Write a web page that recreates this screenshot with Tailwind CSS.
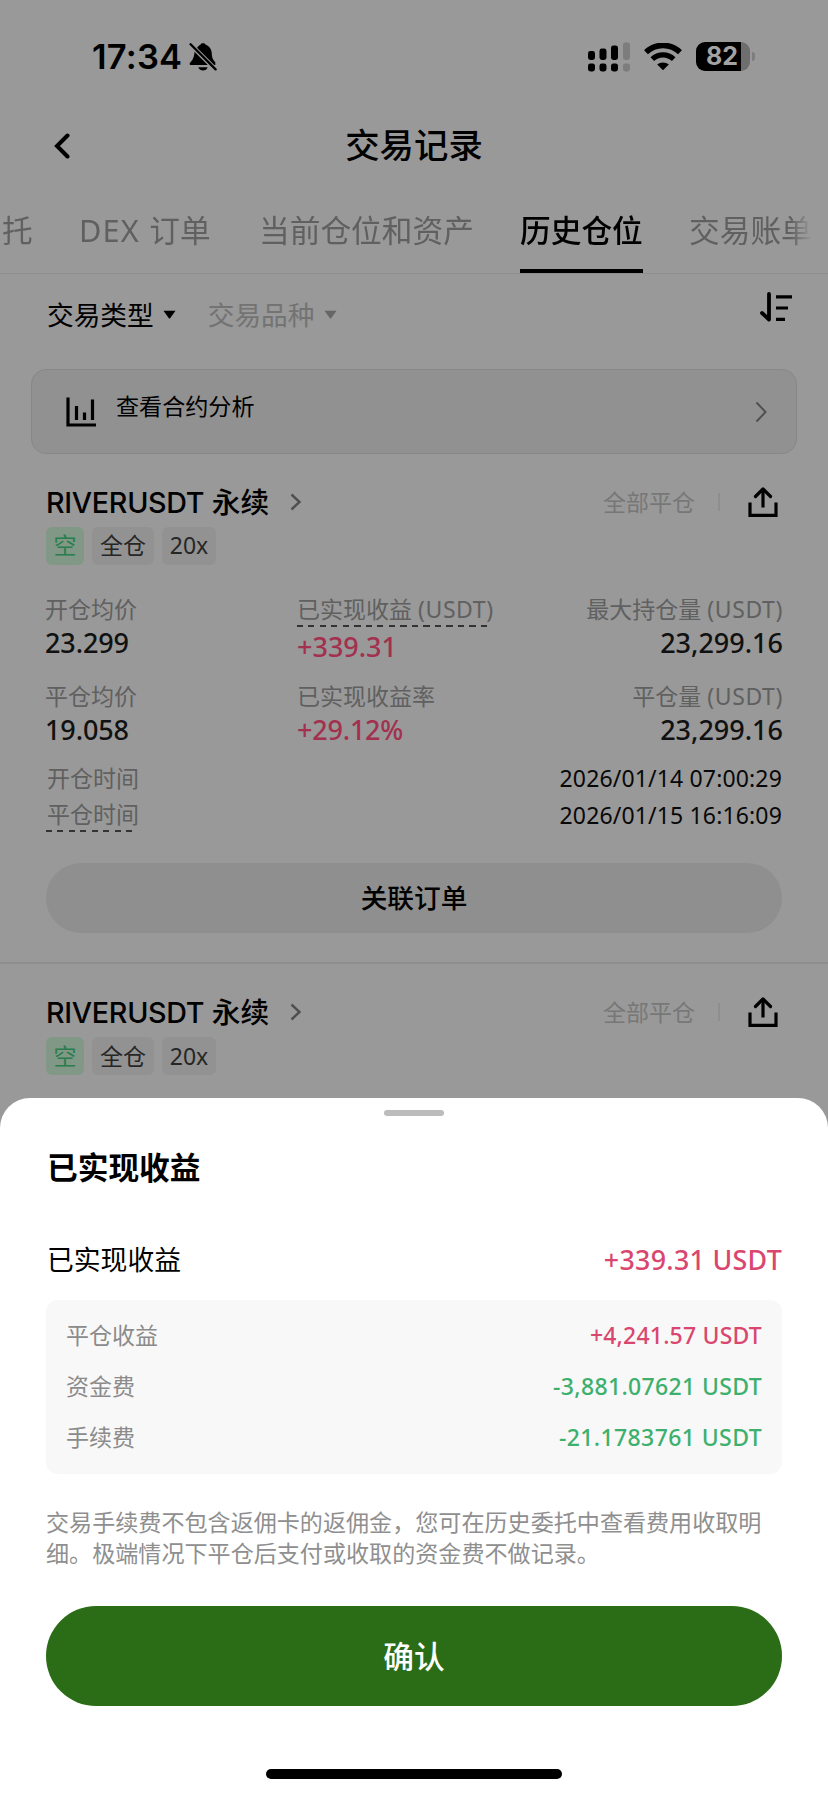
<!DOCTYPE html>
<html lang="zh-CN">
<head>
<meta charset="utf-8">
<title>交易记录</title>
<script src="https://cdn.jsdelivr.net/npm/@tailwindcss/browser@4"></script>
</head>
<body class="bg-[#999999]">
<div class="w-[828px] h-[1795px] overflow-hidden bg-[#999999] text-black flex flex-col font-['Noto_Sans','Noto_Sans_CJK_SC',sans-serif] whitespace-nowrap">

  <!-- Status bar -->
  <div class="h-[113px] shrink-0 flex items-center pl-[92px] pr-[73px]">
    <span class="w-[97px] mt-px font-['Inter',sans-serif] font-semibold text-[34.500px] leading-none tracking-[0.200px]">17:34</span>
    <svg class="w-[28px] h-[30px]" viewBox="0 0 28 30" fill="#000">
      <path d="M8.500 5.200 C9.600 4 10.700 3.200 11.600 2.600 C12 0.800 16 0.800 16.400 2.600 C20.500 4 22.600 7.600 22.800 11.600 C22.900 16 24 17.800 26.300 20.300 V23 H1.600 C0.400 23 0.300 21.400 1.300 20.500 C4.600 17.300 5.300 13.600 5.600 9.600Z"/>
      <path d="M9.400 25.300 H18.600 C17.600 29.600 10.400 29.600 9.400 25.300Z"/>
      <path d="M1 2 L27.500 28.500" stroke="#999" stroke-width="4.600"/>
      <path d="M1.600 2.200 L26.600 27.400" stroke="#000" stroke-width="2.300" stroke-linecap="round"/>
    </svg>
    <svg class="ml-auto w-[42px] h-[30px]" viewBox="0 0 42 30">
      <rect x="0" y="9" width="7" height="9" rx="2.400"/><rect x="11.500" y="6.500" width="7" height="11.500" rx="2.400"/><rect x="23" y="3.500" width="7" height="14.500" rx="2.400"/><rect x="35" y="0.500" width="7" height="17.500" rx="2.400" fill="#7d7d7d"/>
      <rect x="0" y="21.500" width="7" height="8" rx="2.400"/><rect x="11.500" y="21.500" width="7" height="8" rx="2.400"/><rect x="23" y="21.500" width="7" height="8" rx="2.400"/><rect x="35" y="21.500" width="7" height="8" rx="2.400" fill="#7d7d7d"/>
    </svg>
    <svg class="ml-[14px] w-[38px] h-[28px]" viewBox="0 0 38 28" fill="none" stroke="#000">
      <path d="M2 9.200 A24.500 24.500 0 0 1 36 9.200" stroke-width="5.600"/>
      <path d="M8.300 16.200 A15.500 15.500 0 0 1 29.700 16.200" stroke-width="5.200"/>
      <path d="M19 27.300 L13.200 21.600 C16 18.800 22 18.800 24.800 21.600Z" fill="#000" stroke="none"/>
    </svg>
    <div class="ml-[14px] w-[54px] h-[29px] rounded-[9px] overflow-hidden bg-[linear-gradient(90deg,#000_45px,#6e6e6e_45px)] flex items-center">
      <span class="pl-[10px] font-['Inter',sans-serif] font-bold text-[25px] leading-none text-[#a3a3a3]">82</span>
    </div>
    <div class="ml-[2px] w-[3px] h-[9px] rounded-r-full bg-[#7d7d7d]"></div>
  </div>

  <!-- Title bar -->
  <div class="h-[65px] shrink-0 grid grid-cols-[1fr_auto_1fr] items-center">
    <svg class="ml-[52px] w-[18px] h-[28px]" viewBox="0 0 18 28" fill="none" stroke="#000" stroke-width="4" stroke-linecap="round"><path d="M15.500 3.500 L5 14 L15.500 24.500"/></svg>
    <h1 class="text-[34.400px] leading-none font-medium">交易记录</h1>
  </div>

  <!-- Tabs -->
  <div class="h-[96px] shrink-0 flex text-[30.700px] text-[#606060] border-b border-[#8f8f8f] pt-[11px]">
    <div class="w-[812px] flex overflow-hidden [mask-image:linear-gradient(90deg,#000_790px,transparent_812px)]">
      <span class="w-[79px] shrink-0 pl-[2px] leading-[83px]">托</span>
      <span class="w-[180px] shrink-0 leading-[83px]"><span class="tracking-[1.200px]">DEX </span>订单</span>
      <span class="w-[261px] shrink-0 leading-[83px]">当前仓位和资产</span>
      <span class="w-[123px] h-[84px] shrink-0 leading-[83px] text-black font-medium border-b-4 border-black">历史仓位</span>
      <span class="pl-[46px] shrink-0 leading-[83px]">交易账单</span>
    </div>
  </div>

  <!-- Filters -->
  <div class="h-[95px] shrink-0 flex items-start pl-[47px] pr-[35px]">
    <div class="h-[82px] flex items-center text-[26.700px]">
      <span>交易类型</span>
      <svg class="ml-[9px] w-[13px] h-[10px]" viewBox="0 0 13 10"><path d="M0.500 0.800 H12.500 L7.300 8 Q6.500 9 5.700 8Z"/></svg>
      <span class="ml-[32px] text-[#737373]">交易品种</span>
      <svg class="ml-[9px] w-[13px] h-[10px]" viewBox="0 0 13 10"><path d="M0.500 0.800 H12.500 L7.300 8 Q6.500 9 5.700 8Z" fill="#666"/></svg>
    </div>
    <svg class="ml-auto mt-[18px] w-[33px] h-[31px]" viewBox="0 0 33 31" fill="none" stroke="#000" stroke-width="3.200"><path d="M9 2 V27.500 L2 21" stroke-width="3.800" stroke-linecap="round" stroke-linejoin="round"/><path d="M16 4.800 H32 M16 16 H28 M16 27.300 H25"/></svg>
  </div>

  <!-- Analysis entry -->
  <div class="mx-[31px] h-[85px] shrink-0 rounded-[15px] border border-[#878787] bg-[#919191] flex items-center pl-[34px] pr-[29px]">
    <svg class="w-[30px] h-[30px]" viewBox="0 0 30 30" fill="none" stroke="#000" stroke-width="3.200"><path d="M2 0.500 V28 H30"/><path d="M10.500 9 V23 M18.500 15.500 V23 M26.500 2.500 V23"/></svg>
    <span class="ml-[20px] mb-[9px] text-[23.100px] leading-none">查看合约分析</span>
    <svg class="ml-auto w-[12px] h-[22px]" viewBox="0 0 12 22" fill="none" stroke="#505050" stroke-width="2"><path d="M1.500 1.500 L10.500 11 L1.500 20.500"/></svg>
  </div>

  <!-- Position 1 -->
  <section class="h-[510px] shrink-0 border-b-2 border-[#8d8d8d] pt-[24px]">
    <div class="h-[48px] flex items-center pl-[46px] pr-[50px]">
      <span class="w-[222px] text-[28.700px] leading-[46px] font-medium"><span class="font-['Inter'] tracking-[-0.300px]">RIVERUSDT</span> 永续</span>
      <svg class="ml-[22px] w-[12px] h-[18px]" viewBox="0 0 12 18" fill="none" stroke="#4f4f4f" stroke-width="2.400"><path d="M1.500 1.500 L9.500 9 L1.500 16.500"/></svg>
      <span class="ml-auto text-[23px] leading-[46px] text-[#777]">全部平仓</span>
      <i class="ml-[23px] w-[2px] h-[18px] bg-[#8e8e8e]"></i>
      <svg class="ml-[28px] w-[30px] h-[32px]" viewBox="0 0 30 32" fill="none" stroke="#000" stroke-width="3.200"><path d="M2 16.500 V29.300 H28 V16.500"/><path d="M15 21.500 V4"/><path d="M7.500 10.500 L15 3 L22.500 10.500" stroke-linecap="round" stroke-linejoin="round"/></svg>
    </div>
    <div class="mt-[1px] flex gap-[8px] pl-[46px] text-[23px] leading-[37px] text-[#262626]">
      <span class="w-[38px] h-[38px] text-center rounded-[6px] bg-[#819887] text-[#2a7d4d]">空</span>
      <span class="w-[62px] h-[38px] text-center rounded-[6px] bg-[#929292]">全仓</span>
      <span class="w-[54px] h-[38px] text-center rounded-[6px] bg-[#929292]">20x</span>
    </div>
    <div class="mt-[26px] grid grid-cols-[252px_1fr_auto] pl-[45px] pr-[45px] text-[23px] text-[#606060]">
      <div class="h-[87px]"><div class="h-[36px] leading-[36px]">开仓均价</div><div class="leading-[32px] text-[27px] tracking-[-0.100px] font-medium text-[#111]">23.299</div></div>
      <div class="h-[87px]"><div class="h-[36px] leading-[36px] flex flex-col items-start"><span class="h-[34px]">已实现收益 <span class="tracking-[0.600px]">(USDT)</span></span><i class="w-[192px] h-[2px] shrink-0 bg-[repeating-linear-gradient(90deg,#333_0_6px,transparent_6px_11.500px)]"></i></div><div class="leading-[39px] text-[27px] font-medium text-[#a3304f]">+339.31</div></div>
      <div class="h-[87px] text-right"><div class="h-[36px] leading-[36px]">最大持仓量 <span class="tracking-[0.600px]">(USDT)</span></div><div class="leading-[32px] text-[27px] font-medium text-[#111]">23,299.16</div></div>
      <div class="h-[82px]"><div class="h-[36px] leading-[36px]">平仓均价</div><div class="leading-[31px] text-[27px] tracking-[-0.100px] font-medium text-[#111]">19.058</div></div>
      <div class="h-[82px]"><div class="h-[36px] leading-[36px]">已实现收益率</div><div class="leading-[31px] text-[27px] tracking-[-0.200px] font-medium text-[#a3304f]">+29.12%</div></div>
      <div class="h-[82px] text-right"><div class="h-[36px] leading-[36px]">平仓量 <span class="tracking-[0.600px]">(USDT)</span></div><div class="leading-[31px] text-[27px] font-medium text-[#111]">23,299.16</div></div>
    </div>
    <div class="flex justify-between pl-[47px] pr-[46px] text-[23px] text-[#606060]">
      <div><div class="leading-[36px]">开仓时间</div><div class="leading-[36px] h-[34px]">平仓时间</div><i class="block -ml-px w-[88px] h-[2px] bg-[repeating-linear-gradient(90deg,#333_0_6px,transparent_6px_11.500px)]"></i></div>
      <div class="text-right text-[#080808] tracking-[0.150px]"><div class="leading-[36px]">2026/01/14 07:00:29</div><div class="leading-[38px]">2026/01/15 16:16:09</div></div>
    </div>
    <div class="mt-[29px] mx-[46px] h-[70px] rounded-full bg-[#8f8f8f] flex items-center justify-center text-[26.700px] font-medium">关联订单</div>
  </section>

  <!-- Position 2 -->
  <section class="h-[134px] shrink-0 pt-[24px]">
    <div class="h-[48px] flex items-center pl-[46px] pr-[50px]">
      <span class="w-[222px] text-[28.700px] leading-[46px] font-medium"><span class="font-['Inter'] tracking-[-0.300px]">RIVERUSDT</span> 永续</span>
      <svg class="ml-[22px] w-[12px] h-[18px]" viewBox="0 0 12 18" fill="none" stroke="#4f4f4f" stroke-width="2.400"><path d="M1.500 1.500 L9.500 9 L1.500 16.500"/></svg>
      <span class="ml-auto text-[23px] leading-[46px] text-[#777]">全部平仓</span>
      <i class="ml-[23px] w-[2px] h-[18px] bg-[#8e8e8e]"></i>
      <svg class="ml-[28px] w-[30px] h-[32px]" viewBox="0 0 30 32" fill="none" stroke="#000" stroke-width="3.200"><path d="M2 16.500 V29.300 H28 V16.500"/><path d="M15 21.500 V4"/><path d="M7.500 10.500 L15 3 L22.500 10.500" stroke-linecap="round" stroke-linejoin="round"/></svg>
    </div>
    <div class="mt-[1px] flex gap-[8px] pl-[46px] text-[23px] leading-[38px] text-[#262626]">
      <span class="w-[38px] h-[38px] text-center rounded-[6px] bg-[#819887] text-[#2a7d4d]">空</span>
      <span class="w-[62px] h-[38px] text-center rounded-[6px] bg-[#929292]">全仓</span>
      <span class="w-[54px] h-[38px] text-center rounded-[6px] bg-[#929292]">20x</span>
    </div>
  </section>

  <!-- Bottom sheet -->
  <div class="h-[697px] shrink-0 rounded-t-[30px] bg-white flex flex-col pt-[12px] px-[46px]">
    <div class="self-center w-[60px] h-[6px] rounded-full bg-[#bcbcbc]"></div>
    <h2 class="mt-[31px] pl-px text-[30.700px] leading-[40px] font-bold">已实现收益</h2>
    <div class="mt-[53px] flex justify-between pl-px text-[26.800px] leading-[40px]">
      <span>已实现收益</span><span class="text-[#d9476f] font-medium tracking-[0.300px]">+339.31 USDT</span>
    </div>
    <div class="mt-[20px] h-[174px] rounded-[12px] bg-[#f8f8f8] px-[20px] pt-[10px] text-[23px] leading-[51px] text-[#8b8b8b]">
      <div class="flex justify-between"><span>平仓收益</span><span class="text-[#d9476f] font-medium tracking-[0.200px]">+4,241.57 USDT</span></div>
      <div class="flex justify-between"><span>资金费</span><span class="text-[#3cb06c] font-medium tracking-[0.350px]">-3,881.07621 USDT</span></div>
      <div class="flex justify-between"><span>手续费</span><span class="text-[#3cb06c] font-medium tracking-[0.400px]">-21.1783761 USDT</span></div>
    </div>
    <p class="mt-[33px] text-[23.080px] leading-[30.700px] text-[#8f8f8f]">交易手续费不包含返佣卡的返佣金，您可在历史委托中查看费用收取明<br>细。极端情况下平仓后支付或收取的资金费不做记录。</p>
    <button class="mt-[38px] h-[100px] shrink-0 rounded-full bg-[#2a6d16] text-white text-[30.700px] font-medium">确认</button>
    <div class="mt-[63px] self-center w-[296px] h-[10px] shrink-0 rounded-full bg-black"></div>
  </div>
</div>
</body>
</html>
